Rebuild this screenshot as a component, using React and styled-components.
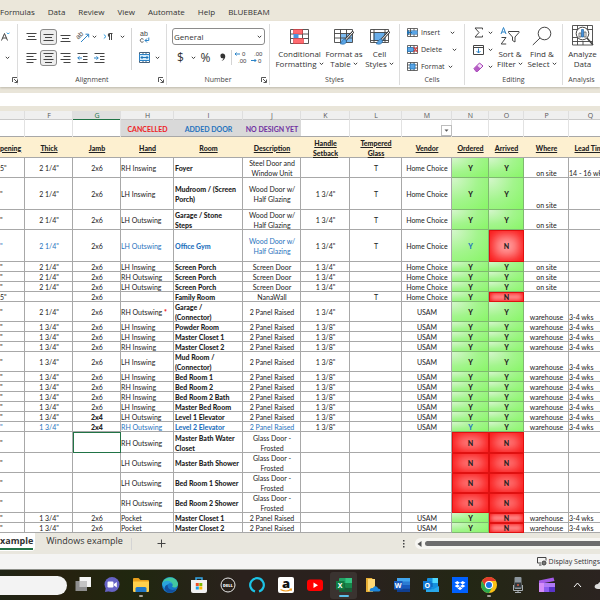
import React from 'react';
import styled, { createGlobalStyle, css } from 'styled-components';

const Global = createGlobalStyle`
  *, *::before, *::after { box-sizing: border-box; }
  html, body { margin: 0; padding: 0; }
  body { background: #e9e5d9; overflow-x: hidden; }
  button, input, select { font: inherit; color: inherit; margin: 0; padding: 0; border: 0; background: none; }
  svg { display: block; flex: none; }
`;

const Page = styled.div`
  min-height: 100vh;
  display: flex;
  flex-direction: column;
  overflow: hidden;
  font-family: "Open Sans", "Noto Sans", sans-serif;
  font-size: 8px;
  color: #333;
  background: #e9e5d9;
`;

/* ---------- ribbon ---------- */
const MenuBar = styled.nav`
  display: flex;
  align-items: center;
  gap: 13px;
  height: 21px;
  padding-top: 3px;
  background: #ebe7da;
`;
const MenuItem = styled.button`
  white-space: nowrap;
  line-height: 12px;
`;
const Ribbon = styled.section`
  display: grid;
  grid-template-columns: 18px 149px 103px 130px 65px 98px minmax(36px, 1fr);
  height: 66px;
  background: #fff;
  box-shadow: 0 1px 2px #bdb9ac;
`;
const Group = styled.div`
  display: flex;
  flex-direction: column;
  min-width: 0;
  margin: 3px 0;
  border-right: 1px solid #dcdcdc;
  &:last-child { border-right: 0; }
`;
const GroupBody = styled.div`
  flex: 1;
  display: flex;
  padding-left: ${(p) => p.$pad || 0}px;
`;
const GroupFoot = styled.div`
  display: grid;
  grid-template-columns: ${(p) => (p.$launcher ? '10px 1fr 10px' : '1fr')};
  align-items: center;
  justify-items: center;
  height: 10px;
  font-size: 7px;
  line-height: 10px;
  white-space: nowrap;
  color: #444;
`;
const Stack = styled.div`
  display: flex;
  flex-direction: column;
  gap: ${(p) => p.$gap || 0}px;
  padding-top: ${(p) => p.$top || 0}px;
`;
const ToolRow = styled.div`
  display: flex;
  align-items: center;
  height: 17px;
`;
const Tool = styled.button`
  display: flex;
  align-items: center;
  justify-content: center;
  width: ${(p) => p.$w || 17}px;
  height: 16px;
  font-size: ${(p) => p.$fs || 8}px;
  ${(p) => p.$on && css`border: 1px solid #8a8a8a; border-radius: 3px; background: #ededed;`}
`;
const VLine = styled.span`
  width: 1px;
  height: ${(p) => p.$h}px;
  margin: ${(p) => p.$m || 0};
  background: #d4d4d4;
`;
const Combo = styled.label`
  display: grid;
  align-items: center;
  width: 93px;
  height: 17px;
  border: 1px solid #8c8c8c;
  border-radius: 3px;
  & > * { grid-area: 1 / 1; }
  & > svg { justify-self: end; margin-right: 2px; pointer-events: none; }
`;
const ComboSelect = styled.select`
  appearance: none;
  width: 100%;
  height: 15px;
  padding-left: 1px;
  outline: 0;
`;
const BigTool = styled.button`
  display: flex;
  flex-direction: column;
  align-items: center;
  gap: 3px;
  width: ${(p) => p.$w}px;
  padding-top: ${(p) => p.$top || 0}px;
`;
const BigLabel = styled.span`
  display: flex;
  flex-direction: column;
  align-items: center;
  font-size: 8px;
  line-height: 10px;
  white-space: nowrap;
`;
const WithChevron = styled.span`
  display: flex;
  align-items: center;
  gap: 2px;
`;
const CellTool = styled.button`
  display: flex;
  align-items: center;
  gap: 3px;
  height: 17px;
  font-size: 7px;
`;
const CellToolText = styled.span`
  min-width: ${(p) => p.$w}px;
  text-align: left;
`;

const FormulaBar = styled.input`
  display: block;
  width: 100%;
  height: 13px;
  margin: 6px 0 5px;
  padding: 0 6px;
  background: #fff !important;
  outline: 0;
`;

/* ---------- sheet ---------- */
const Sheet = styled.main`
  overflow: hidden;
  background: #fff;
`;
const Grid = styled.table`
  width: 100%;
  min-width: 612px;
  table-layout: fixed;
  border-collapse: separate;
  border-spacing: 0;
  font-family: Lato, "Liberation Sans", sans-serif;
  font-size: 7px;
  line-height: 10px;
  color: #222;
`;
const Col = styled.col`
  width: ${(p) => p.$w}px;
`;
const Row = styled.tr`
  height: ${(p) => p.$h}px;
`;
const Letter = styled.th`
  padding: 0;
  height: 9px;
  font-family: "Open Sans", sans-serif;
  font-weight: 400;
  font-size: 7px;
  line-height: 9px;
  color: ${(p) => (p.$on ? '#217346' : '#555')};
  background: ${(p) => (p.$on ? '#dfdfdf' : '#efefef')};
  box-shadow: inset -1px 0 #dedede, inset 0 -1px ${(p) => (p.$on ? '#217346' : '#c9c9c9')};
`;
const LegendCell = styled.td`
  padding: 0;
  text-align: center;
  vertical-align: middle;
  font-weight: 700;
  white-space: nowrap;
  color: ${(p) => p.$color || '#222'};
  background: ${(p) => (p.$color ? '#d9d9d9' : '#fff')};
  box-shadow: inset ${(p) => (p.$color ? '0' : '-1px')} 0 #e2e2e2, inset 0 -1px #a8a8a8;
`;
const FilterButton = styled.button`
  display: flex;
  align-items: center;
  justify-content: center;
  width: 11px;
  height: 11px;
  margin: 4px 0 0 auto;
  border: 1px solid #bdbdbd;
  background: #fff;
`;
const Heading = styled.th`
  padding: 0;
  vertical-align: middle;
  text-align: ${(p) => p.$align || 'center'};
  white-space: pre;
  font-weight: 900;
  text-decoration: underline;
  background: #fdf0d0;
  box-shadow: inset 0 -1px #a8a8a8;
`;
const Cell = styled.td`
  padding: 0 0 0 ${(p) => p.$pad || 0}px;
  text-align: ${(p) => p.$align || 'center'};
  vertical-align: ${(p) => p.$v || 'middle'};
  white-space: pre;
  font-weight: ${(p) => (p.$bold ? 900 : 400)};
  color: ${(p) => (p.$blue ? '#1f72bd' : 'inherit')};
  box-shadow: inset -1px -1px #a8a8a8;
  ${(p) => p.$active && css`outline: 1px solid #217346; outline-offset: -1px;`}
`;
const Yes = styled(Cell)`
  background: radial-gradient(farthest-corner at 0 0, #d5f6cc, #a3f58d 50%, #86f664);
  box-shadow: inset -1px -1px #7fb870;
`;
const No = styled(Cell)`
  background: #ff9d9d;
  box-shadow: inset 0 0 0 1px #e01010, inset 0 0 ${(p) => (p.$small ? 5 : 12)}px ${(p) => (p.$small ? 2 : 5)}px #fa1616;
`;
const Star = styled.span`
  color: #e11;
  font-weight: 900;
`;

/* ---------- bottom bars ---------- */
const TabBar = styled.div`
  display: flex;
  align-items: center;
  height: 21px;
  background: #e9e7de;
  font-size: 9px;
`;
const Tab = styled.button`
  height: 18px;
  margin-bottom: 3px;
  padding: 0 ${(p) => (p.$on ? 2 : 8)}px 0 ${(p) => (p.$on ? 0 : 11)}px;
  white-space: nowrap;
  font-weight: ${(p) => (p.$on ? 700 : 400)};
  background: ${(p) => (p.$on ? '#fff' : 'none')};
  border-radius: 0 0 4px 0;
`;
const TabText = styled.span`
  display: block;
  line-height: 14px;
  border-bottom: 2px solid ${(p) => (p.$on ? '#217346' : 'transparent')};
`;
const AddSheet = styled.button`
  display: flex;
  margin-left: 25px;
`;
const ScrollArea = styled.div`
  display: flex;
  align-items: center;
  gap: 10px;
  width: 33%;
  margin-left: auto;
`;
const ScrollTrack = styled.div`
  flex: 1;
  display: flex;
  align-items: center;
  gap: 3px;
  height: 11px;
  padding-left: 2px;
  border-radius: 6px 0 0 6px;
  background: #f7f6f2;
`;
const ScrollThumb = styled.div`
  flex: 1;
  height: 5px;
  border-radius: 3px 0 0 3px;
  background: #6d6d6d;
`;
const StatusBar = styled.div`
  display: flex;
  justify-content: flex-end;
  align-items: center;
  height: 15px;
  background: #f4f4f3;
  font-size: 7px;
`;
const StatusButton = styled.button`
  display: flex;
  align-items: center;
  gap: 2px;
  white-space: nowrap;
`;
const Taskbar = styled.footer`
  display: flex;
  align-items: center;
  height: 31px;
  border-top: 1px solid #8d8f88;
  background: linear-gradient(90deg, #1f2415, #27200f 8%, #20270f 22%, #2a211d 40%, #2a211e 60%, #232714 78%, #2b2320);
`;
const Search = styled.input`
  width: 67px;
  height: 19px;
  margin-right: 1px;
  border-radius: 0 10px 10px 0;
  background: #f3f3f3 !important;
  outline: 0;
`;
const TaskItem = styled.button`
  display: grid;
  justify-items: center;
  align-items: center;
  grid-template-rows: 5px 16px 6px;
  width: 29px;
  height: 27px;
  border-radius: 3px;
  & > svg { grid-row: 2; }
  ${(p) => p.$on && css`width: 27px; margin: 0 1px; background: #3a3330;`}
`;
const Running = styled.span`
  grid-row: 3;
  width: ${(p) => (p.$on ? 10 : 4)}px;
  height: 2px;
  border-radius: 1px;
  background: ${(p) => (p.$on ? '#5cc0ea' : '#a9a49c')};
`;
const Tray = styled.div`
  display: flex;
  align-items: center;
  gap: 12px;
  margin-left: auto;
  margin-right: -10px;
`;
const Glyphs = styled.g`
  font-family: "Liberation Sans", Arial, sans-serif;
  font-size: ${(p) => p.$fs}px;
  fill: #444;
  stroke: none;
`;

/* ---------- icons ---------- */
const Svg = ({ w, h, children }) => (
  <svg width={w} height={h} viewBox={`0 0 ${w} ${h}`} fill="none" stroke="#444" strokeWidth="1" aria-hidden="true">
    {children}
  </svg>
);
const Chevron = () => <Svg w={5} h={4}><path d="M.8 .8l1.700 1.800L4.200 .8" strokeWidth="1" /></Svg>;
const Launcher = () => <Svg w={6} h={6}><path d="M.5 5V.5H5M2 2l3 3M5.500 2.500v3h-3" strokeWidth=".9" /></Svg>;
const Lines = ({ d }) => <Svg w={11} h={10}><path d={d} strokeWidth="1" /></Svg>;

const TOP = 'M.5 1.500h10M2 4.500h7M.5 7.500h10';
const MID = 'M.5 2.500h10M2 5.500h7M.5 8.500h10';
const BOT = 'M.5 3.500h10M2 6.500h7M.5 9.500h10';
const LEFT = 'M.5 .5h10M.5 3.500h7M.5 6.500h10M.5 9.500h7';
const CENTER = 'M.5 .5h10M2 3.500h7M.5 6.500h10M2 9.500h7';
const RIGHT = 'M.5 .5h10M3.500 3.500h7M.5 6.500h10M3.500 9.500h7';

const Orientation = () => (
  <Svg w={14} h={14}>
    <Glyphs $fs={7} transform="rotate(-45 5 7)"><text x="1" y="7">ab</text></Glyphs>
    <path d="M5 12L12.500 4.500M9.500 4.200h3.200v3.200" stroke="#2b83c7" />
  </Svg>
);
const Pilcrow = () => (
  <Svg w={10} h={9}>
    <path d="M.8 2.500L3 4.500.8 6.500" stroke="#2b9be0" />
    <path d="M6.500 8V1.500H9.500M8.500 8V1.500" />
    <path d="M6.500 1C4.300 1 4.300 5 6.500 5z" fill="#444" stroke="none" />
  </Svg>
);
const WrapText = () => (
  <Svg w={11} h={14}>
    <Glyphs $fs={7}><text x="1" y="6">ab</text></Glyphs>
    <path d="M4.500 9.300C2.500 8 1.200 9 1.300 10.500s1.700 2.200 3.200 1.200" strokeWidth=".9" />
    <path d="M9.800 7.500v3H6M8 8.500l-2 2 2 2" stroke="#2b83c7" />
  </Svg>
);
const Merge = () => (
  <Svg w={11} h={11}>
    <path d="M.5 .5h10v10H.5zM4 .5v2M7 .5v2M4 8.500v2M7 8.500v2" stroke="#44617c" />
    <path d="M.5 2.500h10v6H.5z" fill="#d5ebfa" stroke="#2b83c7" />
    <path d="M2 5.500h7M3.500 4L2 5.500 3.500 7M7.500 4L9 5.500 7.500 7" stroke="#1c73b8" />
  </Svg>
);
const Indent = ({ out }) => (
  <Svg w={11} h={10}>
    <path d="M.5 .5h10M6 3.500h4.500M6 6.500h4.500M.5 9.500h10" />
    <path d={out ? 'M5 5H.8M2.500 3.300L.8 5l1.700 1.700' : 'M0 5h4.200M2.500 3.300L4.200 5 2.500 6.700'} stroke="#2b83c7" />
  </Svg>
);
const ShrinkFont = () => (
  <Svg w={9} h={9}>
    <path d="M.5 8.500L3.500 1.500l3 7M1.500 6h4" />
    <path d="M5.800 .6L7.200 2 8.600 .6" stroke="#2b9be0" />
  </Svg>
);
const Decimal = ({ more }) => (
  <Svg w={13} h={13}>
    <Glyphs $fs={6}>
      <text x={more ? 8 : 4} y="5">{more ? '0' : '.00'}</text>
      <text x={more ? 4 : 8} y="12">{more ? '.00' : '0'}</text>
    </Glyphs>
    {more
      ? <path d="M6 3H1M2.500 1.500L1 3l1.500 1.500" stroke="#2b83c7" />
      : <path d="M1 9.500h5M4.500 8L6 9.500 4.500 11" stroke="#2b83c7" />}
  </Svg>
);
const CondFormat = () => (
  <Svg w={19} h={18}>
    <path d="M.5 1.500h18v14H.5zM6.500 1.500v14M12.500 1.500v14M.5 6h18M.5 10.500h18" strokeWidth=".9" />
    <path d="M3.500 1.500h9V6h-9z" fill="#ff6b70" stroke="#d9383e" strokeWidth=".6" />
    <path d="M3.500 6h5v4.500h-5z" fill="#4a93dd" stroke="none" />
    <path d="M3.500 10.500h10v5h-10z" fill="#ff6b70" stroke="#d9383e" strokeWidth=".6" />
  </Svg>
);
const Brush = () => (
  <g>
    <path d="M19.500 3.500L11 12.500" stroke="#444" strokeWidth="2.600" />
    <path d="M19.200 3.800L11 12.500" stroke="#fff" strokeWidth="1" />
    <path d="M11 11c-2.500 0-2.500 3-5 4.500 3 1.500 6.500 .5 6.500-2.500z" fill="#5aa5e6" stroke="#2468a5" strokeWidth=".7" />
  </g>
);
const TableFormat = () => (
  <Svg w={20} h={18}>
    <path d="M6.500 5.500h12v9h-12z" fill="#7dbbf0" stroke="none" />
    <path d="M.5 1.500h18v13H.5zM6.500 1.500v13M12.500 1.500v13M.5 5.500h18M.5 10h18" strokeWidth=".9" />
    <Brush />
  </Svg>
);
const CellStyles = () => (
  <Svg w={20} h={18}>
    <path d="M4 4.500h11v8H4z" fill="#69aeea" stroke="#2b83c7" strokeWidth=".7" />
    <path d="M.5 1.500h18v13H.5zM4 1.500v13M15 1.500v13M.5 4.500h18M.5 12.500h18" strokeWidth=".9" />
    <Brush />
  </Svg>
);
const CellIcon = ({ kind }) => (
  <Svg w={11} h={11}>
    <path d="M.5 1.500h10v8H.5zM3.500 1.500v8M7 1.500v8M.5 4h10M.5 7h10" strokeWidth=".8" />
    {kind === 'insert' && <><path d="M4 3.500h6.500v4H4z" fill="#5aa5e6" stroke="none" /><path d="M5 5.500H0M2 3.500l-2 2 2 2" stroke="#1c73b8" strokeWidth="1.200" /></>}
    {kind === 'delete' && <><path d="M.5 3.500h6v4h-6z" fill="#5aa5e6" stroke="#1c73b8" strokeWidth=".7" /><path d="M6.500 3l4 5M10.500 3l-4 5" stroke="#e0393e" strokeWidth="1.200" /></>}
    {kind === 'format' && <path d="M3 3h5v5H3z" fill="#5aa5e6" stroke="#1c73b8" strokeWidth=".8" />}
  </Svg>
);
const Sigma = () => <Svg w={10} h={11}><path d="M8.500 2.500v-1.500H1l4 4.500-4 4.500h7.500V8.500" /></Svg>;
const Fill = () => (
  <Svg w={11} h={10}>
    <path d="M.5 .5h10v9H.5zM.5 2.500h10" />
    <path d="M5.500 3.500v4.500M3.500 6l2 2 2-2" stroke="#2b83c7" />
  </Svg>
);
const Eraser = () => (
  <Svg w={11} h={10}>
    <path d="M1 6.500L6.500 1l3.500 3L4.500 9.500H3z" fill="#f3e0f6" stroke="#a23bb3" />
    <path d="M1 6.500l3-3 3.500 3-3 3H3z" fill="#b55cc4" stroke="none" />
  </Svg>
);
const SortFilter = () => (
  <Svg w={20} h={20}>
    <path d="M1 8L3.500 1.500 6 8M2 6h3" stroke="#2b83c7" />
    <path d="M1.500 11.500H6L1.200 18H6.200" />
    <path d="M8.500 5.500h10.500v1l-4 4.500v5l-2.500-1.500V11l-4-4.500z" />
  </Svg>
);
const Magnifier = () => <Svg w={20} h={20}><circle cx="12.500" cy="7.500" r="6.300" /><path d="M8 12L.8 19" /></Svg>;
const Analyze = () => (
  <Svg w={22} h={21}>
    <path d="M.5 .5h20v19.500H.5zM.5 4.500h20M.5 12.500h6M.5 16.500h20M5.500 .5v4M15.500 .5v4M5.500 12v8M11 16v4" strokeWidth=".9" />
    <circle cx="10.500" cy="8.500" r="6.300" fill="#fff" />
    <path d="M7 8h2v4H7zM12 7h2v5h-2z" fill="#fff" strokeWidth=".7" />
    <path d="M9.500 4.500h2V12h-2z" fill="#4a93dd" stroke="#2468a5" strokeWidth=".7" />
    <path d="M15 13l6 7" strokeWidth="1.500" />
  </Svg>
);
const DisplayIcon = () => (
  <Svg w={10} h={9}>
    <path d="M9 3.500V.5H.5v5.500H4M2 8h2.500" />
    <circle cx="7" cy="6" r="2" fill="#777" />
  </Svg>
);

const T = ({ children }) => (
  <svg width="16" height="16" viewBox="0 0 16 16" fill="none" aria-hidden="true">{children}</svg>
);
const OfficeTile = ({ letter, dark }) => (
  <>
    <path d="M0 4h8.500v8.500H0z" fill={dark} />
    <text x="4.200" y="10.800" fontSize="7" fontWeight="700" fill="#fff" textAnchor="middle">{letter}</text>
  </>
);
const taskIcons = [
  ['Task view', <T><path d="M4.500 0H16v10H4.500z" fill="#f4f4f4" /><path d="M.5 4H12v10H.5z" fill="#8e8e8e" /><path d="M4.500 4H12v6H4.500z" fill="#c4c4c4" /></T>],
  ['Chat', <T><circle cx="8" cy="7.500" r="7.500" fill="#6663c4" /><path d="M1 15l1-5 5 4z" fill="#6663c4" /><rect x="3.500" y="4.500" width="6" height="6" rx="1.200" fill="#fff" /><path d="M10 7l2.800-2v5.500L10 8.500z" fill="#fff" /></T>],
  ['File Explorer', <T><path d="M0 2q0-1 1-1h4.500l2 2H15q1 0 1 1v10H0z" fill="#e8a01c" /><path d="M0 4.500h16V14q0 1-1 1H1q-1 0-1-1z" fill="#ffd04c" /><path d="M2.500 15v-3.500q0-1.500 1.500-1.500h8q1.500 0 1.500 1.500V15z" fill="#1f78c8" /></T>, true],
  ['Edge', <T><circle cx="8" cy="8" r="8" fill="#1678c8" /><path d="M.3 6.500C1.500-1 14-2 16 6.500c.4 4-4 5-6 3.300 2-2.500-.5-5-3.500-5C3.500 4.800 1 6 .3 8z" fill="#43c9a0" /><path d="M.2 7C2 2.500 9 3 10 7c-3-2-6 1-4 5C2.500 12 .5 9.500 .2 7z" fill="#2aa4dc" /><path d="M6 7.500c-1.500 4 3 7 8 4.500-2 4-7 5-10 2C1.500 11 3 8 6 7.500z" fill="#124f9c" /></T>],
  ['Store', <T><path d="M5 3V1h6v2" stroke="#35a7e8" strokeWidth="1.500" /><path d="M0 3h16v11q0 2-2 2H2q-2 0-2-2z" fill="#f1f1f1" /><path d="M4.800 6h3v3h-3z" fill="#f04e23" /><path d="M8.300 6h3v3h-3z" fill="#7db900" /><path d="M4.800 9.500h3v3h-3z" fill="#1ba3e8" /><path d="M8.300 9.500h3v3h-3z" fill="#fdb900" /></T>],
  ['Dell', <T><circle cx="8" cy="8" r="7" stroke="#e8e8e8" strokeWidth="1" /><text x="8" y="10" fontSize="4" fontWeight="800" fill="#fff" textAnchor="middle">DELL</text></T>],
  ['Alexa', <T><path d="M6 14.500A6.800 6.800 0 1 1 10 14.500" stroke="#1cc3e6" strokeWidth="2.200" /></T>],
  ['Amazon', <T><rect width="16" height="16" rx="2" fill="#fff" /><text x="8" y="11" fontSize="13" fontWeight="800" fill="#111" textAnchor="middle">a</text><path d="M2.500 12.500q5.500 3 10.500 0M11.500 12l2 0-.5 1.800" stroke="#f39a1c" strokeWidth="1.100" /></T>],
  ['YouTube', <T><rect y="2.500" width="16" height="11.500" rx="3" fill="#f00" /><path d="M6.500 5.500v5.500l4.500-2.700z" fill="#fff" /></T>],
  ['Excel', <T><rect x="3" y="1" width="13" height="14" rx="1" fill="#21a366" /><path d="M9.500 1H16v5H9.500z" fill="#33c481" /><path d="M3 6h6.500v4.500H3zM9.500 10.500H16V15H3v-4.500z" fill="#185c37" /><path d="M9.500 6H16v4.500H9.500z" fill="#17874a" /><OfficeTile letter="X" dark="#107c41" /></T>, true, true],
  ['OneDrive folder', <T><path d="M1 1h6l1 2v12H1z" fill="#e7ae35" /><path d="M3 2h7v12H3z" fill="#ffd977" /><path d="M5 14.500c-1-3 1.500-4 3-3.500 1-3 5-2 5 .5 3 0 3 3 1 3z" fill="#1b86dc" /></T>],
  ['Word', <T><rect x="3" y="1" width="13" height="14" rx="1" fill="#2b7cd3" /><path d="M3 1h13v3.500H3z" fill="#41a5ee" /><path d="M3 8h13v3.500H3z" fill="#185abd" /><path d="M3 11.500h13V15H3z" fill="#103f91" /><OfficeTile letter="W" dark="#185abd" /></T>],
  ['Outlook', <T><rect x="4" y="1" width="11" height="13" rx="1" fill="#1490df" /><path d="M9.500 1H15v5H9.500z" fill="#50d9ff" /><path d="M4 6h5.500v4H4z" fill="#0a5fb0" /><path d="M3 9l7 3.500L16 9v6H3z" fill="#28a8ea" /><OfficeTile letter="O" dark="#0f78d4" /></T>],
  ['Dropbox', <T><path d="M0 0h16v16H0z" fill="#0061fe" /><path d="M5.300 4L8 5.700 5.300 7.400 2.600 5.700zM10.700 4l2.700 1.700-2.700 1.700L8 5.700zM5.300 7.400L8 9.100l-2.700 1.700-2.700-1.700zM10.700 7.400l2.700 1.700-2.700 1.700L8 9.100zM8 9.800l2.500 1.600L8 13l-2.500-1.600z" fill="#fff" /></T>],
  ['Chrome', <T><circle cx="8" cy="8" r="8" fill="#fbc116" /><path d="M1.100 4A8 8 0 0 1 15 4H8L4.500 10z" fill="#e33b2e" /><path d="M1.100 4A8 8 0 0 0 8 16l3.500-6-7 0z" fill="#2da94f" /><circle cx="8" cy="8" r="4" fill="#fff" /><circle cx="8" cy="8" r="3" fill="#1a73e8" /></T>, true],
  ['Recorder', <T><rect x="4.500" y="0" width="7" height="12" rx="1" fill="#8d979e" /><path d="M5 5.500h6v5H5z" fill="#32383d" /><circle cx="8" cy="8" r="1" fill="#d65b3c" /><path d="M3.500 8v5.500h9V8M8 13v2.500M5 15.500h6" stroke="#aab0b5" /></T>],
  ['Clipchamp', <T><path d="M0 3.500L14.500 .5l1 3.500L0 7z" fill="#a45be8" /><path d="M0 6h16v9H0z" fill="#8d5cf0" /><path d="M0 6h5v9H0z" fill="#d58cf8" /><path d="M5 6h11v4H5z" fill="#b07af6" /><path d="M10 10h6v5h-6z" fill="#5934c8" /></T>],
];

/* ---------- data ---------- */
const columns = [
  ['', 25], ['F', 48], ['G', 48], ['H', 53], ['I', 69], ['J', 58], ['K', 49],
  ['L', 52], ['M', 50], ['N', 37], ['O', 35], ['P', 45], ['Q', 43],
];
const headings = ['pening', 'Thick', 'Jamb', 'Hand', 'Room', 'Description', 'Handle\nSetback',
  'Tempered\nGlass', 'Vendor', 'Ordered', 'Arrived', 'Where', 'Lead Time'];
const legend = { 3: ['CANCELLED', '#ee1c25'], 4: ['ADDED DOOR', '#1f72bd'], 5: ['NO DESIGN YET', '#7030a0'] };

const HC = 'Home Choice';
const U = 'USAM';
const W = 'warehouse';
const WK = '3-4 wks';
const P2 = '2 Panel Raised';
const GD = 'Glass Door -\nFrosted';
const WD = 'Wood Door w/\nHalf Glazing';
const rows = [
  [20, '5"', '2 1/4"', '2x6', 'RH Inswing', 'Foyer', 'Steel Door and\nWindow Unit', '', 'T', HC, 'Y', 'Y', 'on site', '14 - 16 wks'],
  [32, '"', '2 1/4"', '2x6', 'LH Inswing', 'Mudroom / (Screen\nPorch)', WD, '1 3/4"', 'T', HC, 'Y', 'Y', 'on site', ''],
  [20, '"', '2 1/4"', '2x6', 'LH Outswing', 'Garage / Stone\nSteps', WD, '1 3/4"', 'T', HC, 'Y', 'Y', 'on site', ''],
  [32, '"', '2 1/4"', '2x6', 'LH Outswing', 'Office Gym', WD, '1 3/4"', 'T', HC, 'Y', 'N', '', '', 'blue'],
  [10, '"', '2 1/4"', '2x6', 'LH Inswing', 'Screen Porch', 'Screen Door', '1 3/4"', '', HC, 'Y', 'Y', 'on site', ''],
  [10, '"', '2 1/4"', '2x6', 'RH Outswing', 'Screen Porch', 'Screen Door', '1 3/4"', '', HC, 'Y', 'Y', 'on site', ''],
  [10, '"', '2 1/4"', '2x6', 'LH Outswing', 'Screen Porch', 'Screen Door', '1 3/4"', '', HC, 'Y', 'Y', 'on site', ''],
  [10, '5"', '', '2x6', '', 'Family Room', 'NanaWall', '', 'T', HC, 'Y', 'N', '', ''],
  [20, '"', '2 1/4"', '2x6', 'RH Outswing *', 'Garage /\n(Connector)', P2, '1 3/4"', '', U, 'Y', 'Y', W, WK],
  [10, '"', '1 3/4"', '2x6', 'LH Inswing', 'Powder Room', P2, '1 3/8"', '', U, 'Y', 'Y', W, WK],
  [10, '"', '1 3/4"', '2x6', 'LH Inswing', 'Master Closet 1', P2, '1 3/8"', '', U, 'Y', 'Y', W, WK],
  [10, '"', '1 3/4"', '2x6', 'RH Inswing', 'Master Closet 2', P2, '1 3/8"', '', U, 'Y', 'Y', W, WK],
  [20, '"', '1 3/4"', '2x6', 'LH Inswing', 'Mud Room /\n(Connector)', P2, '1 3/8"', '', U, 'Y', 'Y', W, WK],
  [10, '"', '1 3/4"', '2x6', 'LH Inswing', 'Bed Room 1', P2, '1 3/8"', '', U, 'Y', 'Y', W, WK],
  [10, '"', '1 3/4"', '2x6', 'RH Inswing', 'Bed Room 2', P2, '1 3/8"', '', U, 'Y', 'Y', W, WK],
  [10, '"', '1 3/4"', '2x6', 'RH Inswing', 'Bed Room 2 Bath', P2, '1 3/8"', '', U, 'Y', 'Y', W, WK],
  [10, '"', '1 3/4"', '2x6', 'LH Inswing', 'Master Bed Room', P2, '1 3/8"', '', U, 'Y', 'Y', W, WK],
  [10, '"', '1 3/4"', '2x4', 'LH Outswing', 'Level 1 Elevator', P2, '1 3/8"', '', U, 'Y', 'Y', W, WK],
  [10, '"', '1 3/4"', '2x4', 'RH Outswing', 'Level 2 Elevator', P2, '1 3/8"', '', U, 'Y', 'Y', W, WK, 'blue'],
  [21, '"', '', '', 'RH Outswing', 'Master Bath Water\nCloset', GD, '', '', '', 'N', 'N', '', '', 'active'],
  [20, '"', '', '', 'LH Outswing', 'Master Bath Shower', GD, '', '', '', 'N', 'N', '', ''],
  [20, '"', '', '', 'LH Outswing', 'Bed Room 1 Shower', GD, '', '', '', 'N', 'N', '', ''],
  [20, '"', '', '', 'RH Outswing', 'Bed Room 2 Shower', GD, '', '', '', 'N', 'N', '', ''],
  [10, '"', '1 3/4"', '2x6', 'Pocket', 'Master Closet 1', P2, '', '', U, 'Y', 'N', W, WK],
  [10, '"', '1 3/4"', '2x6', 'Pocket', 'Master Closet 2', P2, '', '', U, 'Y', 'N', W, WK],
];
const leftColumns = [0, 3, 4, 12];
const blueColumns = [0, 1, 3, 4, 5, 9];

function DataRow({ row }) {
  const [h, ...rest] = row;
  const values = rest.slice(0, 13);
  const flag = rest[13];
  return (
    <Row $h={h}>
      {values.map((v, i) => {
        const isFlagColumn = i === 9 || i === 10;
        const Kind = isFlagColumn ? (v === 'Y' ? Yes : No) : Cell;
        return (
          <Kind
            key={i}
            $small={h < 15}
            $align={leftColumns.includes(i) ? 'left' : undefined}
            $pad={i === 4 ? 1 : 0}
            $v={i > 10 ? 'bottom' : undefined}
            $bold={i === 4 || isFlagColumn || v === '2x4'}
            $blue={flag === 'blue' && blueColumns.includes(i)}
            $active={flag === 'active' && i === 2}
          >
            {v.endsWith('*') ? <>{v.slice(0, -1)}<Star>*</Star></> : v}
          </Kind>
        );
      })}
    </Row>
  );
}

const Foot = ({ label, launcher }) => (
  <GroupFoot $launcher={launcher}>
    {launcher && <span />}
    <span>{label}</span>
    {launcher && <Launcher />}
  </GroupFoot>
);

export default function App() {
  return (
    <Page>
      <Global />
      <MenuBar>
        {['Formulas', 'Data', 'Review', 'View', 'Automate', 'Help', 'BLUEBEAM'].map((m) => <MenuItem key={m}>{m}</MenuItem>)}
      </MenuBar>

      <Ribbon>
        <Group>
          <GroupBody>
            <Stack $top={4} $gap={4}>
              <ToolRow><Tool $w={10} aria-label="Decrease font size"><ShrinkFont /></Tool></ToolRow>
              <ToolRow><Tool $w={15} aria-label="Font color"><Chevron /></Tool></ToolRow>
            </Stack>
          </GroupBody>
          <Foot launcher />
        </Group>

        <Group>
          <GroupBody $pad={5}>
            <Stack $top={4} $gap={4}>
              <ToolRow>
                <Tool aria-label="Top align"><Lines d={TOP} /></Tool>
                <Tool $on aria-label="Middle align"><Lines d={MID} /></Tool>
                <Tool aria-label="Bottom align"><Lines d={BOT} /></Tool>
                <Tool aria-label="Orientation"><Orientation /></Tool>
                <Tool $w={6} aria-label="Orientation options"><Chevron /></Tool>
                <Tool $w={22} aria-label="Text direction"><Pilcrow /></Tool>
                <Tool $w={6} aria-label="Text direction options"><Chevron /></Tool>
              </ToolRow>
              <ToolRow>
                <Tool aria-label="Align left"><Lines d={LEFT} /></Tool>
                <Tool $on aria-label="Center"><Lines d={CENTER} /></Tool>
                <Tool aria-label="Align right"><Lines d={RIGHT} /></Tool>
                <Tool aria-label="Decrease indent"><Indent out /></Tool>
                <Tool aria-label="Increase indent"><Indent /></Tool>
              </ToolRow>
            </Stack>
            <VLine $h={42} $m="4px 4px 0 6px" />
            <Stack $top={4} $gap={4}>
              <ToolRow><Tool aria-label="Wrap text"><WrapText /></Tool></ToolRow>
              <ToolRow>
                <Tool aria-label="Merge and center"><Merge /></Tool>
                <Tool $w={8} aria-label="Merge options"><Chevron /></Tool>
              </ToolRow>
            </Stack>
          </GroupBody>
          <Foot label="Alignment" launcher />
        </Group>

        <Group>
          <GroupBody $pad={5}>
            <Stack $top={4} $gap={4}>
              <Combo>
                <ComboSelect aria-label="Number format" defaultValue="General"><option>General</option></ComboSelect>
                <Chevron />
              </Combo>
              <ToolRow>
                <Tool $fs={12}>$</Tool>
                <Tool $w={8} aria-label="Currency options"><Chevron /></Tool>
                <Tool $fs={12}>%</Tool>
                <Tool aria-label="Comma style"><Svg w={6} h={9}><path d="M3 .5a2.400 2.400 0 1 0 .5 4.700Q3 7 1.500 8q3.800-1.300 3.800-5Q5 .6 3 .5z" fill="#333" stroke="none" /></Svg></Tool>
                <VLine $h={15} />
                <Tool $w={16} aria-label="Increase decimal"><Decimal more /></Tool>
                <Tool $w={16} aria-label="Decrease decimal"><Decimal /></Tool>
              </ToolRow>
            </Stack>
          </GroupBody>
          <Foot label="Number" launcher />
        </Group>

        <Group>
          <GroupBody $pad={5}>
            <BigTool $w={49} $top={4}><CondFormat /><BigLabel><span>Conditional</span><WithChevron>Formatting <Chevron /></WithChevron></BigLabel></BigTool>
            <BigTool $w={40} $top={4}><TableFormat /><BigLabel><span>Format as</span><WithChevron>Table <Chevron /></WithChevron></BigLabel></BigTool>
            <BigTool $w={31} $top={4}><CellStyles /><BigLabel><span>Cell</span><WithChevron>Styles <Chevron /></WithChevron></BigLabel></BigTool>
          </GroupBody>
          <Foot label="Styles" />
        </Group>

        <Group>
          <GroupBody $pad={7}>
            <Stack>
              <CellTool><CellIcon kind="insert" /><CellToolText $w={26}>Insert</CellToolText><Chevron /></CellTool>
              <CellTool><CellIcon kind="delete" /><CellToolText $w={28}>Delete</CellToolText><Chevron /></CellTool>
              <CellTool><CellIcon kind="format" /><CellToolText>Format</CellToolText><Chevron /></CellTool>
            </Stack>
          </GroupBody>
          <Foot label="Cells" />
        </Group>

        <Group>
          <GroupBody $pad={5}>
            <Stack>
              {[['AutoSum', <Sigma />], ['Fill', <Fill />], ['Clear', <Eraser />]].map(([n, icon]) => (
                <ToolRow key={n}>
                  <Tool aria-label={n}>{icon}</Tool>
                  <Tool $w={6} aria-label={n + ' options'}><Chevron /></Tool>
                </ToolRow>
              ))}
            </Stack>
            <BigTool $w={34} $top={2}><SortFilter /><BigLabel><span>Sort &amp;</span><WithChevron>Filter <Chevron /></WithChevron></BigLabel></BigTool>
            <BigTool $w={30} $top={2}><Magnifier /><BigLabel><span>Find &amp;</span><WithChevron>Select <Chevron /></WithChevron></BigLabel></BigTool>
          </GroupBody>
          <Foot label="Editing" />
        </Group>

        <Group>
          <GroupBody $pad={2}>
            <BigTool $w={35} $top={1}><Analyze /><BigLabel><span>Analyze</span><span>Data</span></BigLabel></BigTool>
          </GroupBody>
          <Foot label="Analysis" />
        </Group>
      </Ribbon>

      <FormulaBar aria-label="Formula bar" />

      <Sheet>
        <Grid>
          <colgroup>{columns.map(([n, w]) => <Col key={n} $w={w} />)}</colgroup>
          <thead>
            <Row $h={9}>{columns.map(([n]) => <Letter key={n} $on={n === 'G'}>{n}</Letter>)}</Row>
          </thead>
          <tbody>
            <Row $h={17}>
              {columns.map(([n], i) => (
                <LegendCell key={n} $color={legend[i] && legend[i][1]}>
                  {legend[i] && legend[i][0]}
                  {n === 'M' && (
                    <FilterButton aria-label="Filter"><Svg w={5} h={3}><path d="M.5 .5h4L2.500 2.800z" fill="#555" stroke="none" /></Svg></FilterButton>
                  )}
                </LegendCell>
              ))}
            </Row>
            <Row $h={21}>
              {headings.map((t, i) => <Heading key={t} $align={i ? 'center' : 'left'}>{t}</Heading>)}
            </Row>
            {rows.map((r, i) => <DataRow key={i} row={r} />)}
          </tbody>
        </Grid>
      </Sheet>

      <TabBar>
        <Tab $on><TabText $on>xample</TabText></Tab>
        <Tab><TabText>Windows example</TabText></Tab>
        <VLine $h={12} />
        <AddSheet aria-label="New sheet"><Svg w={9} h={9}><path d="M4.500 .5v8M.5 4.500h8" /></Svg></AddSheet>
        <ScrollArea>
          <Svg w={3} h={8}><path d="M1 0h1.500v1.500H1zM1 3h1.500v1.500H1zM1 6h1.500v1.500H1z" fill="#444" stroke="none" /></Svg>
          <ScrollTrack>
            <Svg w={5} h={6}><path d="M4.500 0v6L.5 3z" fill="#555" stroke="none" /></Svg>
            <ScrollThumb />
          </ScrollTrack>
        </ScrollArea>
      </TabBar>
      <StatusBar>
        <StatusButton><DisplayIcon />Display Settings</StatusButton>
      </StatusBar>
      <Taskbar>
        <Search aria-label="Search" />
        {taskIcons.map(([name, icon, running, on]) => (
          <TaskItem key={name} aria-label={name} $on={on}>
            {icon}
            {running && <Running $on={on} />}
          </TaskItem>
        ))}
        <Tray>
          <svg width="9" height="6" viewBox="0 0 9 6" fill="none" stroke="#fff" aria-hidden="true"><path d="M1 5l3.500-4L8 5" /></svg>
          <svg width="16" height="10" viewBox="0 0 16 10" fill="#ddd" aria-hidden="true"><path d="M4 9C-1 9 0 4 4 4c2-4 8-3 8 1 4 0 4 4 1 4z" /></svg>
        </Tray>
      </Taskbar>
    </Page>
  );
}
